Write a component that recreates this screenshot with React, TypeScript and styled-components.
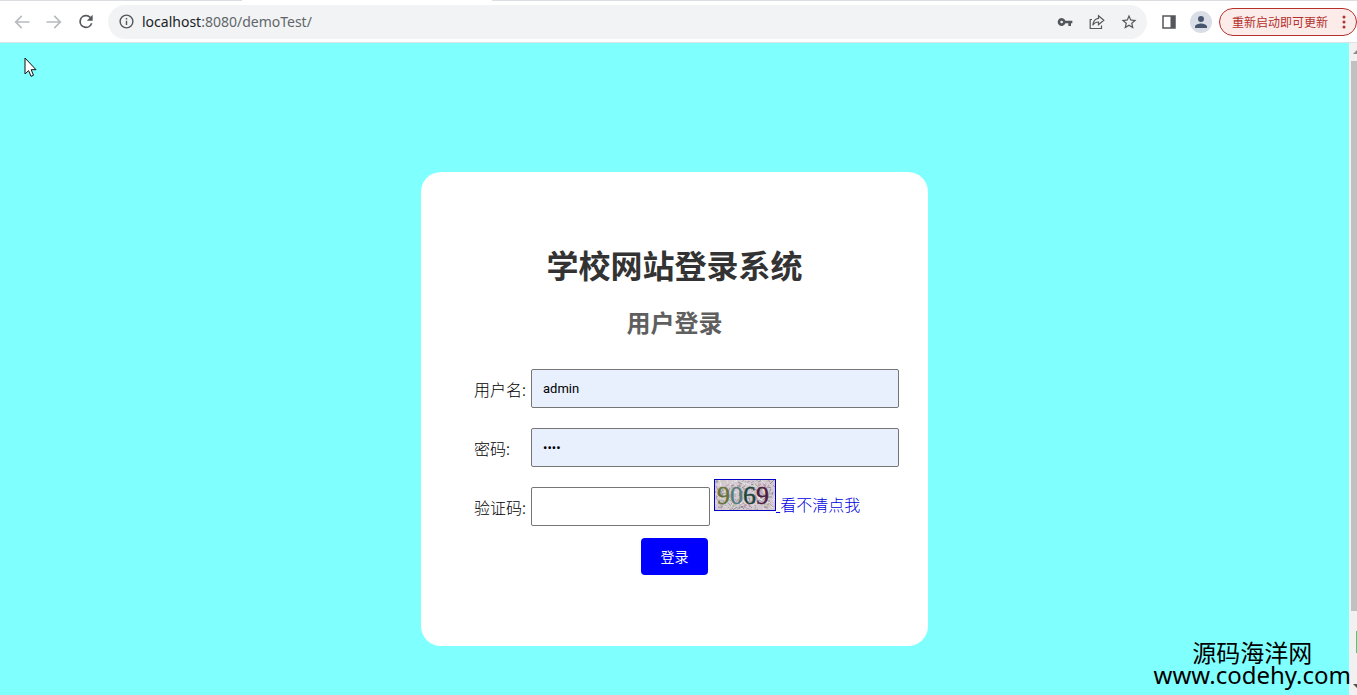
import React from "react";
import styled, { createGlobalStyle } from "styled-components";

const GlobalStyle = createGlobalStyle`
  *, *::before, *::after { box-sizing: border-box; }
  body {
    margin: 0;
    color: #000;
    font-family: "Noto Sans", "Noto Sans CJK SC", sans-serif;
    font-size: 16px;
  }
`;

const Shell = styled.div`
  position: relative;
  display: flex;
  flex-direction: column;
  height: 100vh;
  overflow: hidden;
`;

const TabEdge = styled.div`
  display: flex;
  height: 1px;
  background: #dcdde0;
`;

const ActiveTab = styled.div`
  width: 250px;
  margin-left: 242px;
  background: #fff;
`;

const Toolbar = styled.header`
  display: flex;
  align-items: center;
  gap: 8px;
  height: 42px;
  padding-left: 12px;
  background: #fff;
  border-bottom: 1px solid #dbe3e6;
`;

const NavButtons = styled.nav`
  display: flex;
  gap: 12px;
`;

const IconButton = styled.button<{ $dim?: boolean }>`
  display: flex;
  align-items: center;
  justify-content: center;
  width: 20px;
  height: 20px;
  padding: 0;
  border: 0;
  background: none;
  color: ${(p) => (p.$dim ? "#b9bbbe" : "#54575b")};
`;

const AddressBar = styled.div`
  display: flex;
  flex: 1;
  align-items: center;
  gap: 6px;
  height: 34px;
  margin-left: 4px;
  padding: 0 8px;
  border-radius: 17px;
  background: #f1f3f4;
`;

const Address = styled.div`
  flex: 1;
  color: #62666a;
  font-size: 14px;
  line-height: 20px;
`;

const Host = styled.span`
  color: #202124;
`;

const AddressActions = styled.div`
  display: flex;
  gap: 12px;
`;

const ToolbarActions = styled.div`
  display: flex;
  align-items: center;
  gap: 7px;
  margin-left: 4px;
`;

const Avatar = styled.button`
  display: flex;
  align-items: center;
  justify-content: center;
  width: 22px;
  height: 22px;
  margin-left: 4px;
  padding: 0;
  border: 0;
  border-radius: 50%;
  background: #d9dee6;
  color: #46566f;
`;

const UpdateButton = styled.button`
  display: flex;
  align-items: center;
  justify-content: space-between;
  width: 138px;
  height: 28px;
  padding: 0 10px 0 12px;
  border: 1px solid #b3302c;
  border-radius: 14px;
  background: #fbecea;
  color: #b3302c;
  font-family: "Noto Sans CJK SC", sans-serif;
  font-size: 12px;
  white-space: nowrap;
`;

const Viewport = styled.div`
  display: flex;
  flex: 1;
  min-height: 0;
`;

const Page = styled.main`
  flex: 1;
  padding-top: 129px;
  background: #80ffff;
`;

const ScrollTrack = styled.div`
  display: flex;
  flex-direction: column;
  align-items: flex-end;
  width: 8px;
  background: #f1f1f1;
`;

const ScrollArrow = styled.svg`
  width: 6px;
  height: 18px;
`;

const ScrollThumb = styled.div`
  flex: 1;
  width: 6px;
  margin-bottom: 66px;
  background: #c1c1c1;
`;

const Card = styled.section`
  width: 507px;
  max-width: 100%;
  margin: 0 auto;
  padding: 70px 29px 71px;
  border-radius: 20px;
  background: #fff;
`;

const Title = styled.h1`
  margin: 0;
  color: #333;
  font-size: 32px;
  line-height: 48px;
  text-align: center;
`;

const Subtitle = styled.h2`
  margin: 15px 0 28px;
  color: #5f5f5f;
  font-size: 24px;
  line-height: 36px;
  text-align: center;
`;

const Field = styled.div`
  display: grid;
  grid-template-columns: 53px 1fr;
  column-gap: 4px;
  align-items: center;
  margin-bottom: 20px;
  padding-left: 24px;
`;

const Label = styled.label`
  font-weight: 300;
  font-family: "Noto Sans CJK SC", sans-serif;
  line-height: 24px;
  white-space: nowrap;
`;

const TextInput = styled.input<{ $filled?: boolean }>`
  width: 100%;
  height: 39px;
  padding: 10px 11px;
  border: 1px solid #767676;
  border-radius: 2px;
  outline: 0;
  background: ${(p) => (p.$filled ? "#e8f0fe" : "#fff")};
  color: #000;
  font-family: Roboto, sans-serif;
  font-size: 13px;
`;

const CaptchaRow = styled.div`
  display: grid;
  grid-template-columns: 179px auto;
  column-gap: 4px;
  justify-content: start;
  height: 39px;
`;

const Refresh = styled.div`
  display: flex;
  align-items: baseline;
  margin-top: -8px;
  line-height: 24px;
`;

const CaptchaLink = styled.a`
  color: #0000e0;
  white-space: pre;
`;

const RefreshLink = styled.a`
  color: #0000e0;
  font-family: "Noto Sans CJK SC", sans-serif;
  font-weight: 300;
  text-decoration: none;
`;

const CaptchaImage = styled.svg`
  width: 62px;
  height: 32px;
  border: 1px solid #0000c8;
`;

const Actions = styled.div`
  display: flex;
  justify-content: center;
  margin-top: -8px;
`;

const SubmitButton = styled.button`
  width: 67px;
  height: 37px;
  padding: 0 0 2px;
  border: 0;
  border-radius: 4px;
  background: #0000ff;
  color: #fff;
  font-family: "Noto Sans CJK SC", sans-serif;
  font-size: 14px;
`;

const Watermark = styled.div`
  position: absolute;
  right: 6px;
  bottom: 9px;
  text-align: center;
  font-size: 24px;
  line-height: 22px;
  pointer-events: none;
`;

const Pointer = styled.svg`
  position: absolute;
  top: 57px;
  left: 24px;
  width: 13px;
  height: 21px;
`;

const ScrollBadge = styled.div`
  position: absolute;
  right: 0;
  top: 631px;
  width: 1px;
  height: 22px;
  background: #3fd46a;
`;

const noiseColors = ["#c39aa8", "#9db39d", "#a79dbf", "#e4dce2", "#8f8f8f", "#c6c2a2", "#f0eaf0", "#b08ea0"];

const noise = (() => {
  let seed = 77;
  const next = () => (seed = (seed * 16807) % 2147483647) / 2147483647;
  return Array.from({ length: 260 }, () => {
    const x = Math.floor(next() * 60);
    const y = Math.floor(next() * 30);
    const dx = Math.floor(next() * 9) - 4;
    const dy = Math.floor(next() * 9) - 4;
    return { x, y, dx, dy, color: noiseColors[Math.floor(next() * noiseColors.length)] };
  });
})();

const digits = [
  { char: "9", x: 2, color: "#66733a" },
  { char: "0", x: 15, color: "#587c7e" },
  { char: "6", x: 28, color: "#1c453a" },
  { char: "9", x: 41, color: "#4d1c40" },
];

function Captcha() {
  return (
    <CaptchaImage viewBox="0 0 60 30" role="img" aria-label="验证码">
      <rect width="60" height="30" fill="#d3cad1" />
      {noise.map((n, i) => (
        <path key={i} d={`M${n.x} ${n.y}l${n.dx} ${n.dy}`} stroke={n.color} />
      ))}
      {digits.map((d) => (
        <text
          key={d.x}
          x={d.x}
          y="24"
          fill={d.color}
          stroke={d.color}
          strokeWidth="0.4"
          fontFamily="'Liberation Serif', serif"
          fontSize="26"
        >
          {d.char}
        </text>
      ))}
    </CaptchaImage>
  );
}

const Material = ({ d, size = 18 }: { d: string; size?: number }) => (
  <svg width={size} height={size} viewBox="0 0 24 24" fill="currentColor" aria-hidden="true">
    <path d={d} />
  </svg>
);

const paths = {
  back: "M21 11H6.8l5.6-5.6L11 4l-8 8 8 8 1.4-1.4L6.8 13H21z",
  forward: "M3 11h14.2l-5.6-5.6L13 4l8 8-8 8-1.4-1.4 5.6-5.6H3z",
  reload:
    "M17.65 6.35A8 8 0 1 0 19.73 14h-2.08A6 6 0 1 1 12 6c1.66 0 3.14.69 4.22 1.78L13 11h7V4z",
  info: "M11 7h2v2h-2zm0 4h2v6h-2zm1-9a10 10 0 1 0 0 20 10 10 0 0 0 0-20zm0 18a8 8 0 1 1 0-16 8 8 0 0 1 0 16z",
  key: "M12.65 10A6 6 0 1 0 12.65 14H17v4h4v-4h2v-4zM7 14a2 2 0 1 1 0-4 2 2 0 0 1 0 4z",
  star: "M22 9.24l-7.19-.62L12 2 9.19 8.63 2 9.24l5.46 4.73L5.82 21 12 17.27 18.18 21l-1.63-7.03zM12 15.4l-3.76 2.27 1-4.28-3.32-2.88 4.38-.38L12 6.1l1.71 4.04 4.38.38-3.32 2.88 1 4.28z",
  person: "M12 12a4 4 0 1 0 0-8 4 4 0 0 0 0 8zm0 2c-2.67 0-8 1.34-8 4v2h16v-2c0-2.66-5.33-4-8-4z",
  panel: "M3 3h18v18H3zM5 5v14h9V5z",
};

export default function App() {
  return (
    <>
      <GlobalStyle />
      <Shell>
        <TabEdge>
          <ActiveTab />
        </TabEdge>
        <Toolbar>
          <NavButtons>
            <IconButton $dim aria-label="后退"><Material d={paths.back} size={20} /></IconButton>
            <IconButton $dim aria-label="前进"><Material d={paths.forward} size={20} /></IconButton>
            <IconButton aria-label="重新加载"><Material d={paths.reload} size={21} /></IconButton>
          </NavButtons>
          <AddressBar>
            <IconButton aria-label="网站信息"><Material d={paths.info} size={17} /></IconButton>
            <Address><Host>localhost</Host>:8080/demoTest/</Address>
            <AddressActions>
              <IconButton aria-label="密码"><Material d={paths.key} size={16} /></IconButton>
              <IconButton aria-label="分享">
                <svg width="16" height="16" viewBox="0 0 16 16" fill="none" stroke="currentColor" strokeWidth="1.2" aria-hidden="true">
                  <path d="M3 5.5H1.2v9h11.3v-3" />
                  <path d="M9.5 1.8l5.3 4.4-5.3 4.4V8C6.500 8 5 9 3.800 11.300 4.200 7.500 6 4.800 9.500 4.400z" />
                </svg>
              </IconButton>
              <IconButton aria-label="收藏"><Material d={paths.star} size={18} /></IconButton>
            </AddressActions>
          </AddressBar>
          <ToolbarActions>
            <IconButton aria-label="侧边栏"><Material d={paths.panel} size={18} /></IconButton>
            <Avatar aria-label="用户"><Material d={paths.person} size={18} /></Avatar>
            <UpdateButton>
              重新启动即可更新
              <svg width="4" height="14" viewBox="0 0 4 14" fill="currentColor" aria-hidden="true">
                <circle cx="2" cy="2" r="1.500" />
                <circle cx="2" cy="7" r="1.500" />
                <circle cx="2" cy="12" r="1.500" />
              </svg>
            </UpdateButton>
          </ToolbarActions>
        </Toolbar>
        <Viewport>
          <Page>
            <Card>
              <form onSubmit={(e) => e.preventDefault()}>
                <Title>学校网站登录系统</Title>
                <Subtitle>用户登录</Subtitle>
                <Field>
                  <Label htmlFor="username">用户名:</Label>
                  <TextInput id="username" $filled defaultValue="admin" />
                </Field>
                <Field>
                  <Label htmlFor="password">密码:</Label>
                  <TextInput id="password" type="password" $filled defaultValue="1234" />
                </Field>
                <Field>
                  <Label htmlFor="code">验证码:</Label>
                  <CaptchaRow>
                    <TextInput id="code" />
                    <Refresh>
                      <CaptchaLink href="#code"><Captcha />{" "}</CaptchaLink>
                      <RefreshLink href="#code">看不清点我</RefreshLink>
                    </Refresh>
                  </CaptchaRow>
                </Field>
                <Actions>
                  <SubmitButton type="submit">登录</SubmitButton>
                </Actions>
              </form>
            </Card>
          </Page>
          <ScrollTrack aria-hidden="true">
            <ScrollArrow viewBox="0 0 6 18"><path d="M2 11l4-4v4z" fill="#8b8b8b" /></ScrollArrow>
            <ScrollThumb />
            <ScrollArrow viewBox="0 0 6 18"><path d="M2 7h4v4z" fill="#505050" /></ScrollArrow>
          </ScrollTrack>
        </Viewport>
        <ScrollBadge />
        <Pointer viewBox="0 0 13 21" aria-hidden="true">
          <path d="M1 1v16l3.600-3.400L7 19.300l2.500-1L7.200 12.700H12z" fill="#fff" stroke="#111" />
        </Pointer>
        <Watermark>
          <div>源码海洋网</div>
          <div>www.codehy.com</div>
        </Watermark>
      </Shell>
    </>
  );
}
